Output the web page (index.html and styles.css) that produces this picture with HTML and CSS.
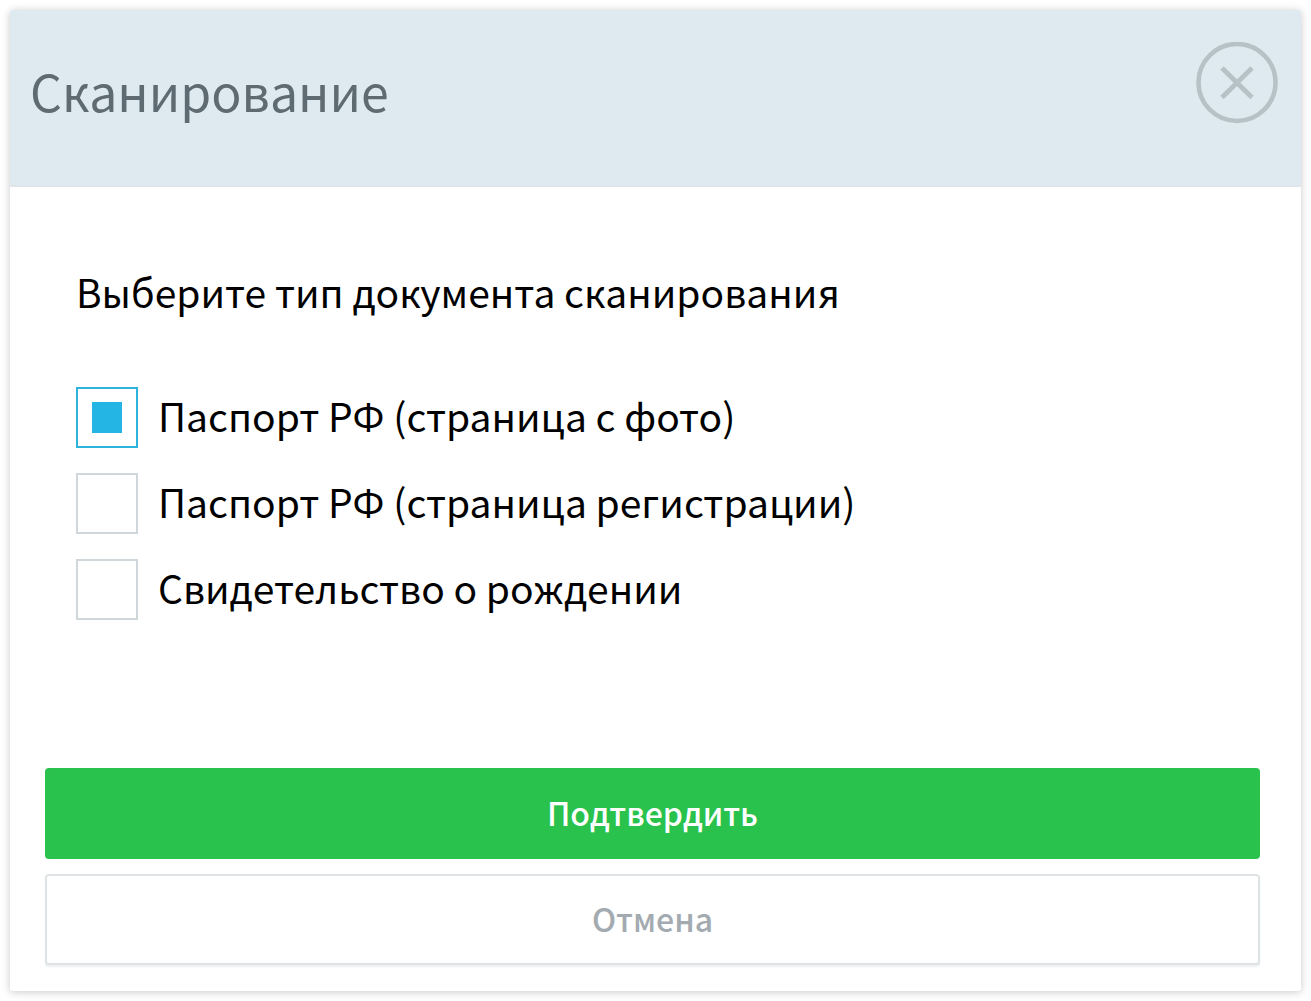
FILE: index.html
```html
<!DOCTYPE html>
<html lang="ru">

<head>
    <meta charset="UTF-8">
    <meta name="viewport" content="width=device-width, initial-scale=1.0">
    <title>Сканирование</title>
    <link rel="stylesheet" href="styles.css">
</head>

<body>
    <form class="modal" method="post">
        <div class="modal-header">
            <h1>Сканирование</h1>
            <button type="button" class="close" aria-label="Закрыть">
                <svg viewBox="0 0 82 82" fill="none" stroke="currentColor">
                    <circle cx="41" cy="40.5" r="38.5" stroke-width="4.6" />
                    <path d="M26 26L56 55.5M56 26L26 55.5" stroke-width="4.8" />
                </svg>
            </button>
        </div>

        <fieldset class="modal-body">
            <legend>Выберите тип документа сканирования</legend>
            <div class="option">
                <input type="radio" name="document" id="passport-photo" checked>
                <label for="passport-photo">Паспорт РФ (страница с фото)</label>
            </div>
            <div class="option">
                <input type="radio" name="document" id="passport-address">
                <label for="passport-address">Паспорт РФ (страница регистрации)</label>
            </div>
            <div class="option">
                <input type="radio" name="document" id="birth">
                <label for="birth">Свидетельство о рождении</label>
            </div>
        </fieldset>

        <div class="modal-footer">
            <button type="submit" class="btn btn-confirm">Подтвердить</button>
            <button type="button" class="btn btn-cancel">Отмена</button>
        </div>
    </form>
</body>

</html>
```

FILE: styles.css
```css
* {
    box-sizing: border-box;
}

body {
    margin: 0;
    padding: 10px;
    min-height: 100vh;
    display: flex;
    background-color: #fff;
    color: #000;
    font-family: "Noto Sans CJK SC", "Noto Sans", sans-serif;
    font-size: 39px;
}

.modal {
    flex: 1;
    display: flex;
    flex-direction: column;
    background-color: #fff;
    border-radius: 3px;
    box-shadow: 0 1px 9px rgba(0, 0, 0, 0.22);
}

/* Header */
.modal-header {
    display: flex;
    justify-content: space-between;
    align-items: flex-start;
    padding: 32px 23px 32px 20px;
    min-height: 177px;
    background-color: #dfeaf0;
    border-bottom: 2px solid #dfe5e8;
    border-radius: 3px 3px 0 0;
}

.modal-header h1 {
    margin: 0;
    padding-top: 10px;
    font-size: 50px;
    line-height: 76px;
    font-weight: 400;
    color: #5f6b73;
}

.close {
    width: 82px;
    height: 82px;
    padding: 0;
    border: none;
    background: none;
    color: #b7c2c7;
    cursor: pointer;
}

.close svg {
    display: block;
}

/* Document type */
.modal-body {
    flex: 1;
    margin: 0;
    padding: 74px 67px 32px 66px;
    border: none;
}

.modal-body legend {
    float: left;
    width: 100%;
    margin-bottom: 66px;
    padding: 0;
    line-height: 60px;
}

.option {
    clear: both;
    display: flex;
    align-items: center;
    gap: 20px;
    margin-bottom: 25px;
}

.option label {
    padding-bottom: 5px;
    line-height: 56px;
}

.option input {
    appearance: none;
    flex: none;
    display: grid;
    place-items: center;
    width: 62px;
    height: 61px;
    margin: 0;
    border: 2px solid #cfd7db;
    background-color: #fff;
}

.option input:checked {
    border-color: #2db4dc;
}

.option input:checked::before {
    content: "";
    width: 30px;
    height: 31px;
    background-color: #24b5e4;
}

/* Buttons */
.modal-footer {
    display: flex;
    flex-direction: column;
    gap: 15px;
    padding: 0 41px 26px 35px;
}

.btn {
    height: 91px;
    padding: 0 0 4px;
    border: none;
    border-radius: 4px;
    font-family: inherit;
    font-size: 32px;
    font-weight: 500;
    cursor: pointer;
}

.btn-confirm {
    background-color: #29c24d;
    color: #fff;
}

.btn-cancel {
    background-color: #fff;
    border: 2px solid #dfe3e5;
    box-shadow: 0 2px 2px #eceff1;
    color: #a3abb1;
}
```
